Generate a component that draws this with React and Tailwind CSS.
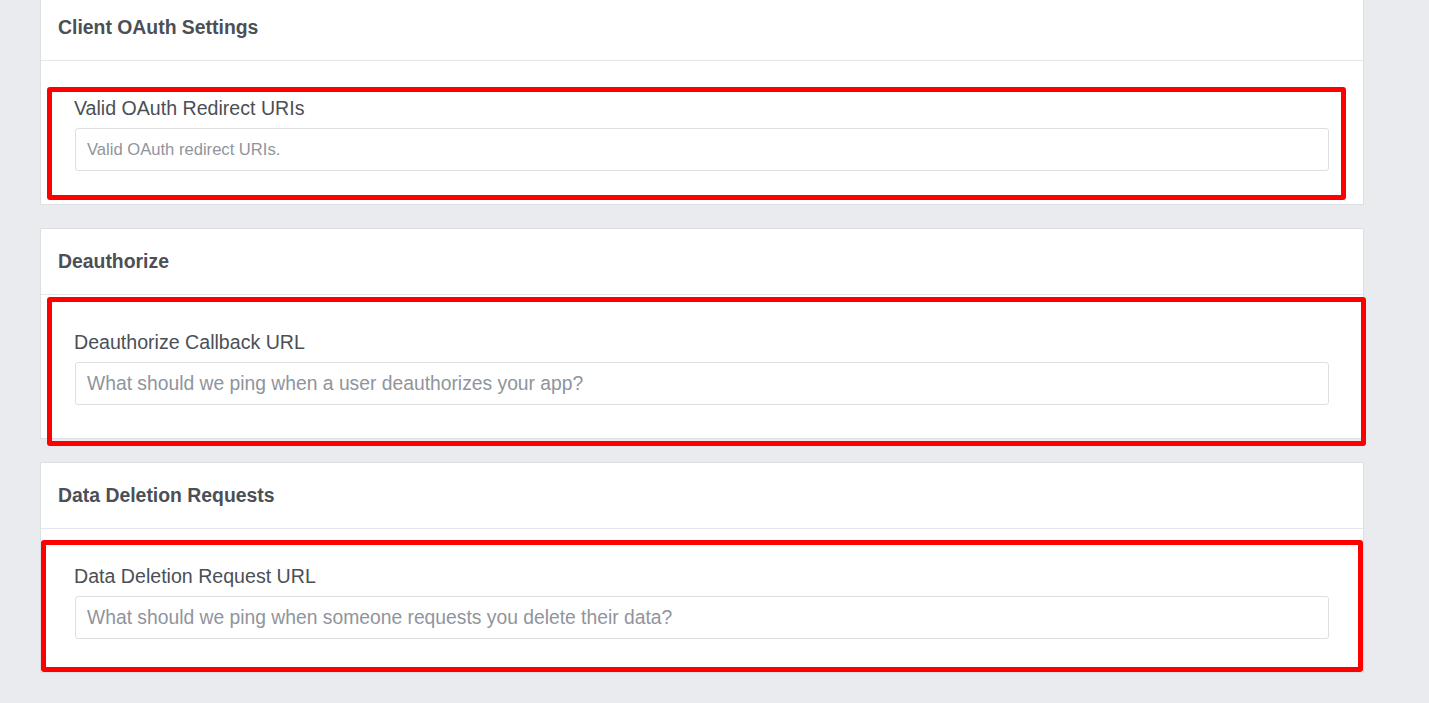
import React from 'react';

const sections = [
    {
        title: 'Client OAuth Settings',
        label: 'Valid OAuth Redirect URIs',
        placeholder: 'Valid OAuth redirect URIs.',
        small: true,
        box: 'left-[6px] top-[92px] w-[1299px] h-[113px]'
    },
    {
        title: 'Deauthorize',
        label: 'Deauthorize Callback URL',
        placeholder: 'What should we ping when a user deauthorizes your app?',
        box: 'left-[6px] top-[68px] w-[1319px] h-[149px]'
    },
    {
        title: 'Data Deletion Requests',
        label: 'Data Deletion Request URL',
        placeholder: 'What should we ping when someone requests you delete their data?',
        box: 'left-0 top-[77px] w-[1322px] h-[132px]'
    }
]

const Card = ({section}) => {
    return (
        <div className="relative bg-white border border-[#dddfe2]">
            <div className="h-[66px] flex items-center pl-[17px] border-b border-[#e5e6e9] text-[19.4px] font-bold text-[#4b4f56]">
                {section.title}
            </div>
            <div className="px-[34px] pt-[37px] pb-[33px]">
                <label className="block -ml-[1px] text-[19.6px] leading-[20px] text-[#4b4f56]">
                    {section.label}
                </label>
                <input
                    type="text"
                    placeholder={section.placeholder}
                    className={"mt-[10px] block w-full h-[43px] pl-[11px] bg-white border border-[#dddfe2] rounded-[3px] outline-none placeholder:text-[#90949c] " +
                        (section.small ? 'text-[16.6px]' : 'text-[19.3px]')}
                />
            </div>
            {/* red annotation box */}
            <div className={"absolute border-[5px] border-[#ff0000] rounded-[3px] pointer-events-none " + section.box}/>
        </div>
    )
}

export default function App() {
    return (
        <div className="min-h-screen h-[703px] overflow-hidden bg-[#e9ebee] font-['Liberation_Sans',Arial,sans-serif]">
            <div className="ml-[40px] w-[1324px] -mt-[6px] flex flex-col gap-[23px]">
                {sections.map((s, i) => <Card key={i} section={s}/>)}
            </div>
        </div>
    )
}
